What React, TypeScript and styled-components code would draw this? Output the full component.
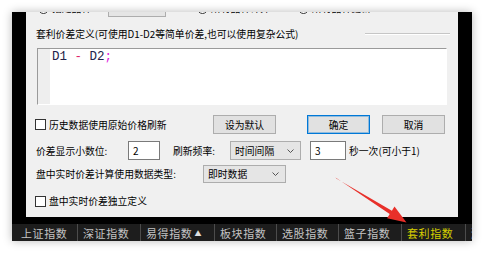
import styled, { createGlobalStyle } from 'styled-components';

const GlobalStyle = createGlobalStyle`
  html, body {
    margin: 0;
    background: #fff;
  }
  body {
    font-family: "Noto Sans CJK SC", "Noto Sans", sans-serif;
  }
`;

const Page = styled.div`
  position: relative;
  width: 486px;
  height: 256px;
  padding: 12px 14px 15px 12px;
  box-sizing: border-box;
`;

const Frame = styled.div`
  width: 460px;
  height: 229px;
  background: #000;
  box-shadow: 0 0 9px rgba(0, 0, 0, 0.28);
  display: flex;
  flex-direction: column;
`;

const Body = styled.div`
  flex: 1;
  min-height: 0;
  display: flex;
  padding: 0 14px 7px;
`;

const Dialog = styled.div`
  flex: 1;
  background: #f0f0f0;
  overflow: hidden;
  padding: 0 13px 0 10px;
  font-size: 9.8px;
  color: #000;
  display: flex;
  flex-direction: column;
`;

const Row = styled.div<{ $mt: number; $h?: number }>`
  display: flex;
  align-items: center;
  flex: none;
  height: ${(p) => p.$h ?? 19}px;
  margin-top: ${(p) => p.$mt}px;
  white-space: nowrap;
`;

const RadioItem = styled.div<{ $w?: number; $ml?: number }>`
  display: flex;
  align-items: center;
  gap: 3px;
  width: ${(p) => (p.$w ? `${p.$w}px` : 'auto')};
  margin-left: ${(p) => p.$ml ?? 0}px;
  flex: none;
`;

const Radio = styled.span`
  width: 9px;
  height: 9px;
  border: 1px solid #333;
  border-radius: 50%;
  background: #fff;
  flex: none;
`;

const GroupHead = styled.div`
  display: flex;
  align-items: center;
  height: 14px;
  margin-top: 10px;
  flex: none;
  white-space: nowrap;
`;

const Etch = styled.div`
  margin-left: auto;
  margin-right: -5px;
  width: 85px;
  border-top: 1px solid #c6c6c6;
  border-bottom: 1px solid #fff;
`;

const Editor = styled.div`
  display: flex;
  height: 57px;
  margin: 7px -2px 0 1px;
  box-sizing: border-box;
  border-top: 1px solid #9a9a9a;
  border-left: 1px solid #9a9a9a;
  border-right: 1px solid #fff;
  border-bottom: 1px solid #fff;
  background: #fff;
  flex: none;
`;

const Gutter = styled.div`
  width: 12px;
  background: #eeeeee;
  flex: none;
`;

const Code = styled.div`
  padding: 1px 0 0 2px;
  font-family: "Liberation Mono", "DejaVu Sans Mono", monospace;
  font-size: 12.5px;
  line-height: 14px;
  white-space: pre;
  color: #23234a;
`;

const Tok = styled.span<{ $c: string }>`
  color: ${(p) => p.$c};
`;

const CheckLabel = styled.div`
  display: flex;
  align-items: center;
  gap: 3px;
`;

const Box = styled.span`
  width: 9px;
  height: 9px;
  margin-left: -1px;
  border: 1px solid #333;
  background: #fff;
  flex: none;
`;

const Button = styled.button<{ $ml: number | 'auto'; $primary?: boolean }>`
  width: 63px;
  height: 19px;
  margin-left: ${(p) => (p.$ml === 'auto' ? 'auto' : `${p.$ml}px`)};
  padding: 0;
  box-sizing: border-box;
  background: #e1e1e1;
  border: 1px solid ${(p) => (p.$primary ? '#0078d7' : '#adadad')};
  box-shadow: ${(p) => (p.$primary ? 'inset 0 0 0 1px rgba(0, 120, 215, 0.35)' : 'none')};
  font-family: inherit;
  font-size: 9.8px;
  color: #000;
`;

const Label = styled.span<{ $w?: number; $ml?: number }>`
  width: ${(p) => (p.$w ? `${p.$w}px` : 'auto')};
  margin-left: ${(p) => p.$ml ?? 0}px;
  flex: none;
`;

const Field = styled.div<{ $w: number; $ml?: number }>`
  width: ${(p) => p.$w}px;
  height: 19px;
  margin-left: ${(p) => p.$ml ?? 0}px;
  box-sizing: border-box;
  background: #fff;
  border: 1px solid #7a7a7a;
  padding-left: 4px;
  display: flex;
  align-items: center;
  font-size: 10px;
  flex: none;
`;

const Select = styled.div<{ $w: number; $h?: number }>`
  width: ${(p) => p.$w}px;
  height: ${(p) => p.$h ?? 19}px;
  box-sizing: border-box;
  background: #e5e5e5;
  border: 1px solid #adadad;
  padding: 0 6px 0 4px;
  display: flex;
  align-items: center;
  justify-content: space-between;
  flex: none;
`;

const TabBar = styled.div`
  height: 17px;
  flex: none;
  display: flex;
  overflow: hidden;
  background: #1d1d1d;
  font-size: 11px;
  letter-spacing: 0.6px;
`;

const Tab = styled.div<{ $w: number; $pl?: number; $active?: boolean }>`
  width: ${(p) => p.$w}px;
  flex: none;
  box-sizing: border-box;
  padding-left: ${(p) => p.$pl ?? 5}px;
  border-right: 1px solid #4c4c4c;
  color: ${(p) => (p.$active ? '#d6cf00' : '#c4c4c4')};
  display: flex;
  align-items: center;
  gap: 2px;
  white-space: nowrap;
  overflow: hidden;
`;

const Caret = styled.span`
  font-size: 7px;
  letter-spacing: 0;
  color: #e0e0e0;
`;

const Overlay = styled.svg`
  position: absolute;
  left: 0;
  top: 0;
  pointer-events: none;
`;

function Chevron() {
  return (
    <svg width="7" height="4" viewBox="0 0 7 4">
      <polyline points="0.5,0.5 3.5,3.5 6.5,0.5" fill="none" stroke="#444" strokeWidth="0.9" />
    </svg>
  );
}

const tabs = [
  { label: '上证指数', w: 66, pl: 9 },
  { label: '深证指数', w: 63 },
  { label: '易得指数', w: 74, caret: true },
  { label: '板块指数', w: 62 },
  { label: '选股指数', w: 62 },
  { label: '篮子指数', w: 63 },
  { label: '套利指数', w: 64, active: true },
  { label: '涨跌', w: 40 },
];

export default function App() {
  return (
    <Page>
      <GlobalStyle />
      <Frame>
        <Body>
          <Dialog>
            <Row $mt={-13} $h={18}>
              <RadioItem $w={70} $ml={2}>
                <Radio />
                指定品种
              </RadioItem>
              <Select $w={58} $h={18}>
                D1
                <Chevron />
              </Select>
              <RadioItem $w={101} $ml={31}>
                <Radio />
                所有品种计算
              </RadioItem>
              <RadioItem>
                <Radio />
                所有品种更新
              </RadioItem>
            </Row>

            <GroupHead>
              套利价差定义(可使用D1-D2等简单价差,也可以使用复杂公式)
              <Etch />
            </GroupHead>

            <Editor>
              <Gutter />
              <Code>
                D1 <Tok $c="#e0246c">-</Tok> D2<Tok $c="#e020e0">;</Tok>
              </Code>
            </Editor>

            <Row $mt={10}>
              <CheckLabel>
                <Box />
                历史数据使用原始价格刷新
              </CheckLabel>
              <Button $ml="auto">设为默认</Button>
              <Button $ml={31} $primary>
                确定
              </Button>
              <Button $ml={12}>取消</Button>
            </Row>

            <Row $mt={7}>
              <Label $w={92}>价差显示小数位:</Label>
              <Field $w={32}>2</Field>
              <Label $w={57} $ml={13}>
                刷新频率:
              </Label>
              <Select $w={71}>
                时间间隔
                <Chevron />
              </Select>
              <Field $w={36} $ml={9}>
                3
              </Field>
              <Label $ml={3}>秒一次(可小于1)</Label>
            </Row>

            <Row $mt={5} $h={18}>
              <Label $w={167}>盘中实时价差计算使用数据类型:</Label>
              <Select $w={83} $h={18}>
                即时数据
                <Chevron />
              </Select>
            </Row>

            <Row $mt={11} $h={14}>
              <CheckLabel>
                <Box />
                盘中实时价差独立定义
              </CheckLabel>
            </Row>
          </Dialog>
        </Body>

        <TabBar>
          {tabs.map((t) => (
            <Tab key={t.label} $w={t.w} $pl={t.pl} $active={t.active}>
              {t.label}
              {t.caret && <Caret>▲</Caret>}
            </Tab>
          ))}
        </TabBar>
      </Frame>

      <Overlay width="486" height="256" viewBox="0 0 486 256">
        <polygon
          points="335.5,177.6 336.3,178.4 391.9,210.7 394.5,206.5 406.5,222.5 387.1,218.3 389.7,214.1"
          fill="#e8302a"
        />
      </Overlay>
    </Page>
  );
}
